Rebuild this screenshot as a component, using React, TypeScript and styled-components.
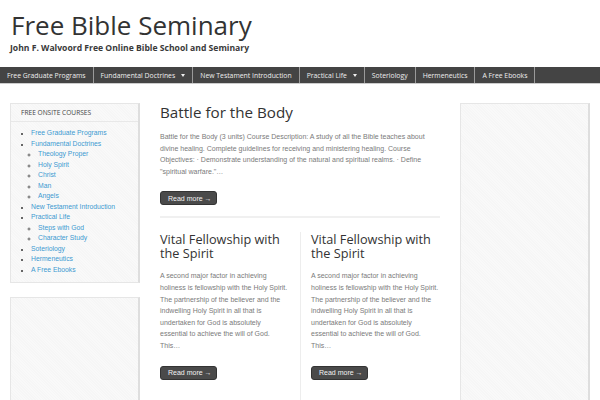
import React from "react"
import styled, { createGlobalStyle } from "styled-components"

const GlobalStyle = createGlobalStyle`
  html, body {
    margin: 0;
    padding: 0;
    background: #fff;
  }
  body {
    font-family: "Liberation Sans", Arial, sans-serif;
  }
`

const navItems = [
  { label: "Free Graduate Programs" },
  { label: "Fundamental Doctrines", drop: true },
  { label: "New Testament Introduction" },
  { label: "Practical Life", drop: true },
  { label: "Soteriology" },
  { label: "Hermeneutics" },
  { label: "A Free Ebooks" },
]

const courses = [
  { label: "Free Graduate Programs" },
  {
    label: "Fundamental Doctrines",
    children: ["Theology Proper", "Holy Spirit", "Christ", "Man", "Angels"],
  },
  { label: "New Testament Introduction" },
  { label: "Practical Life", children: ["Steps with God", "Character Study"] },
  { label: "Soteriology" },
  { label: "Hermeneutics" },
  { label: "A Free Ebooks" },
]

const fellowship =
  "A second major factor in achieving holiness is fellowship with the Holy Spirit. The partnership of the believer and the indwelling Holy Spirit in all that is undertaken for God is absolutely essential to achieve the will of God. This…"

const App = () => {
  return (
    <Page>
      <GlobalStyle />
      <Header>
        <SiteTitle>Free Bible Seminary</SiteTitle>
        <Tagline>John F. Walvoord Free Online Bible School and Seminary</Tagline>
      </Header>
      <Nav>
        {navItems.map((item) => (
          <NavItem key={item.label}>
            {item.label}
            {item.drop && <Caret />}
          </NavItem>
        ))}
      </Nav>
      <Layout>
        <Sidebar>
          <Widget>
            <WidgetTitle>Free Onsite Courses</WidgetTitle>
            <CourseList>
              {courses.map((c) => (
                <li key={c.label}>
                  <Link>{c.label}</Link>
                  {c.children && (
                    <SubList>
                      {c.children.map((s) => (
                        <li key={s}>
                          <Link>{s}</Link>
                        </li>
                      ))}
                    </SubList>
                  )}
                </li>
              ))}
            </CourseList>
          </Widget>
          <Widget $tall />
        </Sidebar>
        <Main>
          <Post>
            <PostTitle>Battle for the Body</PostTitle>
            <Excerpt>
              Battle for the Body (3 units) Course Description: A study of all the
              Bible teaches about divine healing. Complete guidelines for receiving
              and ministering healing. Course Objectives: · Demonstrate
              understanding of the natural and spiritual realms. · Define
              "spiritual warfare."…
            </Excerpt>
            <ReadMore>Read more →</ReadMore>
          </Post>
          <Columns>
            <Column>
              <PostTitle $small>Vital Fellowship with the Spirit</PostTitle>
              <Excerpt>{fellowship}</Excerpt>
              <ReadMore>Read more →</ReadMore>
            </Column>
            <Column $divided>
              <PostTitle $small>Vital Fellowship with the Spirit</PostTitle>
              <Excerpt>{fellowship}</Excerpt>
              <ReadMore>Read more →</ReadMore>
            </Column>
          </Columns>
        </Main>
        <Sidebar>
          <Widget $full />
        </Sidebar>
      </Layout>
    </Page>
  )
}

const Page = styled.div`
  width: 600px;
  height: 400px;
  overflow: hidden;
  background: #fff;
`
const Header = styled.header`
  padding: 8px 0 0 11px;
  height: 55px;
  box-sizing: border-box;
`
const SiteTitle = styled.h1`
  margin: 0;
  font-family: "Open Sans", "Noto Sans", sans-serif;
  font-weight: 400;
  font-size: 26px;
  line-height: 35px;
  color: #333;
`
const Tagline = styled.div`
  margin: 0 0 0 -1px;
  font-family: "Open Sans", "Noto Sans", sans-serif;
  font-weight: 700;
  font-size: 8.6px;
  line-height: 10px;
  color: #3a3a3a;
`
const Nav = styled.nav`
  margin-top: 12px;
  display: flex;
  height: 16px;
  background: #444;
  border-bottom: 1px solid #ccc;
`
const NavItem = styled.div`
  display: flex;
  align-items: center;
  gap: 6px;
  padding: 0 7px;
  font-family: "Open Sans", "Noto Sans", sans-serif;
  font-size: 6.85px;
  color: #eee;
  white-space: nowrap;
  border-right: 1px solid #9a9a9a;
`
const Caret = styled.span`
  width: 0;
  height: 0;
  border-left: 2.5px solid transparent;
  border-right: 2.5px solid transparent;
  border-top: 3px solid #eee;
`
const Layout = styled.div`
  display: grid;
  grid-template-columns: 130px 280px 130px;
  column-gap: 20px;
  padding: 19px 10px 0 10px;
  align-items: start;
`
const Sidebar = styled.aside`
  display: flex;
  flex-direction: column;
  gap: 14px;
`
const Widget = styled.div<{ $tall?: boolean; $full?: boolean }>`
  background: repeating-linear-gradient(45deg, #f6f6f6 0 1px, #f9f9f9 1px 2px);
  border: 1px solid #e6e6e6;
  border-right: 2px solid #dedede;
  box-sizing: border-box;
  min-height: ${(p) => (p.$full ? "320px" : p.$tall ? "120px" : "0")};
  padding-bottom: 7px;
`
const WidgetTitle = styled.div`
  font-family: "Open Sans", "Noto Sans", sans-serif;
  text-transform: uppercase;
  font-size: 6.6px;
  color: #444;
  padding: 4px 10px 4px;
  border-bottom: 1px solid #e8e8e8;
`
const CourseList = styled.ul`
  margin: 6px 0 0;
  padding: 0 0 0 20px;
  list-style: square;
  font-size: 6.8px;
  line-height: 10.5px;
  color: #666;
  li::marker {
    font-size: 5px;
  }
`
const SubList = styled.ul`
  margin: 0;
  padding-left: 7px;
  list-style: circle;
`
const Link = styled.span`
  color: #3d9ad1;
`
const Main = styled.main`
  display: flex;
  flex-direction: column;
`
const Post = styled.article`
  padding-bottom: 11px;
  border-bottom: 2px solid #f0f0f0;
`
const PostTitle = styled.h2<{ $small?: boolean }>`
  margin: 0;
  font-family: "Open Sans", "Noto Sans", sans-serif;
  font-weight: 400;
  font-size: ${(p) => (p.$small ? "12.7px" : "15.2px")};
  line-height: ${(p) => (p.$small ? "14px" : "18px")};
  color: #333;
`
const Excerpt = styled.p`
  margin: 10px 0 14px;
  font-size: 7px;
  line-height: 11.6px;
  color: #7a7a7a;
`
const ReadMore = styled.button`
  display: block;
  width: 57px;
  height: 14px;
  padding: 0 0 0 7px;
  text-align: left;
  border: 1px solid #333;
  border-radius: 3px;
  background: #4a4a4a;
  color: #f2f2f2;
  font-family: "Liberation Sans", Arial, sans-serif;
  font-size: 7px;
`
const Columns = styled.div`
  display: grid;
  grid-template-columns: 1fr 1fr;
  padding-top: 14px;
`
const Column = styled.div<{ $divided?: boolean }>`
  padding: ${(p) => (p.$divided ? "0 0 30px 10px" : "0 10px 30px 0")};
  border-left: ${(p) => (p.$divided ? "1px solid #ededed" : "none")};
`

export default App
